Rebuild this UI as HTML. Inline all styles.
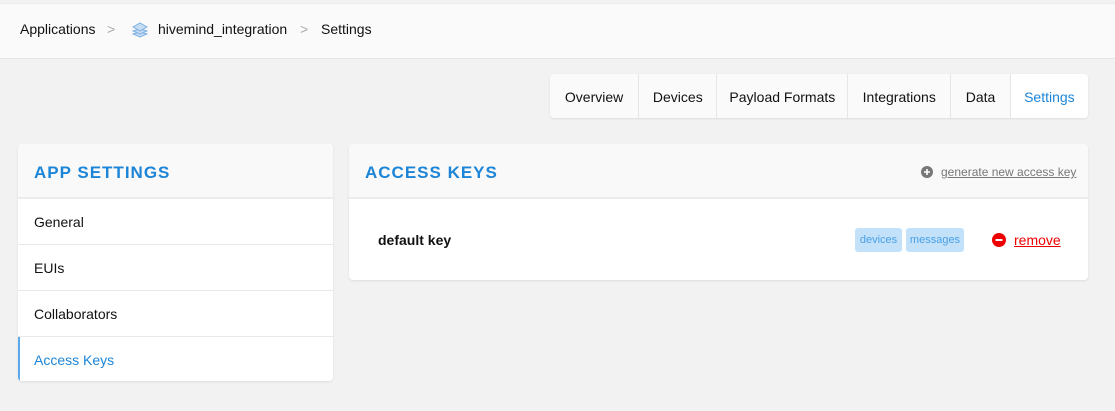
<!DOCTYPE html><html><head><style>
body{margin:0;width:1115px;height:411px;background:#f2f2f2;font-family:"Liberation Sans",sans-serif;position:relative;overflow:hidden;color:#111}
.top{position:absolute;left:0;top:3px;width:1115px;height:54px;background:#fafafa;border-bottom:1px solid #e6e6e6;border-top:1px solid #ececec}
.top span{position:absolute;top:17px;font-size:14px}
.chev{color:#aaa}
.tabs{position:absolute;left:550px;top:74px;width:538px;height:44px;background:#fafafa;border-radius:4px;box-shadow:0 1px 2px #ddd;display:flex;overflow:hidden}
.tabs div{height:44px;line-height:46px;font-size:14px;text-align:center;border-right:1px solid #e6e6e6}
.card{position:absolute;background:#fff;border-radius:4px;box-shadow:0 1px 2px #ddd;overflow:hidden}
.hd{height:55px;background:#f9f9f9;border-bottom:2px solid #ececec;box-sizing:border-box}
.hd h2{margin:0;position:absolute;left:16px;top:19px;font-size:17px;letter-spacing:1px;color:#1c85d8;font-weight:900}
.item{height:46px;line-height:46px;padding-left:16px;font-size:14px;border-bottom:1px solid #e9e9e9;box-sizing:border-box}
</style></head><body>
<div class="top">
<span style="left:20px">Applications</span><span class="chev" style="left:107px">&gt;</span>
<svg style="position:absolute;left:131px;top:17px" width="18" height="18" viewBox="0 0 18 18"><g fill="#c6dcf3" stroke="#7fb0e0" stroke-width="1"><path d="M9 11L2 13 9 16 16 13z"/><path d="M9 8L2 10 9 13 16 10z"/><path d="M9 2L2 6 9 10 16 6z"/></g></svg>
<span style="left:158px">hivemind_integration</span><span class="chev" style="left:300px">&gt;</span>
<span style="left:321px">Settings</span></div>
<div class="tabs"><div style="width:89px">Overview</div><div style="width:78px">Devices</div><div style="width:131px">Payload Formats</div><div style="width:103px">Integrations</div><div style="width:59px">Data</div><div style="width:78px;border:0;color:#1c85d8;background:#fff">Settings</div></div>
<div class="card" style="left:18px;top:144px;width:315px;height:237px">
<div class="hd"><h2>APP SETTINGS</h2></div>
<div class="item">General</div><div class="item">EUIs</div><div class="item">Collaborators</div>
<div class="item" style="border-left:2px solid #5aa9ea;padding-left:14px;color:#1c85d8;border-bottom:0">Access Keys</div></div>
<div class="card" style="left:349px;top:144px;width:739px;height:136px">
<div class="hd"><h2>ACCESS KEYS</h2>
<svg style="position:absolute;left:572px;top:22px" width="12" height="12"><circle cx="6" cy="6" r="6" fill="#777"/><path d="M6 3v6M3 6h6" stroke="#fff" stroke-width="1.6"/></svg>
<span style="position:absolute;left:592px;top:21px;font-size:12px;color:#777;text-decoration:underline">generate new access key</span></div>
<b style="position:absolute;left:29px;top:88px;font-size:14px">default key</b>
<span style="position:absolute;left:506px;top:84px;width:47px;height:24px;line-height:24px;text-align:center;background:#c3e2fa;border-radius:3px;font-size:11px;color:#4aa0e6">devices</span>
<span style="position:absolute;left:557px;top:84px;width:58px;height:24px;line-height:24px;text-align:center;background:#c3e2fa;border-radius:3px;font-size:11px;color:#4aa0e6">messages</span>
<svg style="position:absolute;left:643px;top:89px" width="14" height="14"><circle cx="7" cy="7" r="7" fill="#e00"/><path d="M3.5 7h7" stroke="#fff" stroke-width="2"/></svg>
<span style="position:absolute;left:665px;top:88px;font-size:14px;color:#e00;text-decoration:underline">remove</span>
</div>
</body></html>
